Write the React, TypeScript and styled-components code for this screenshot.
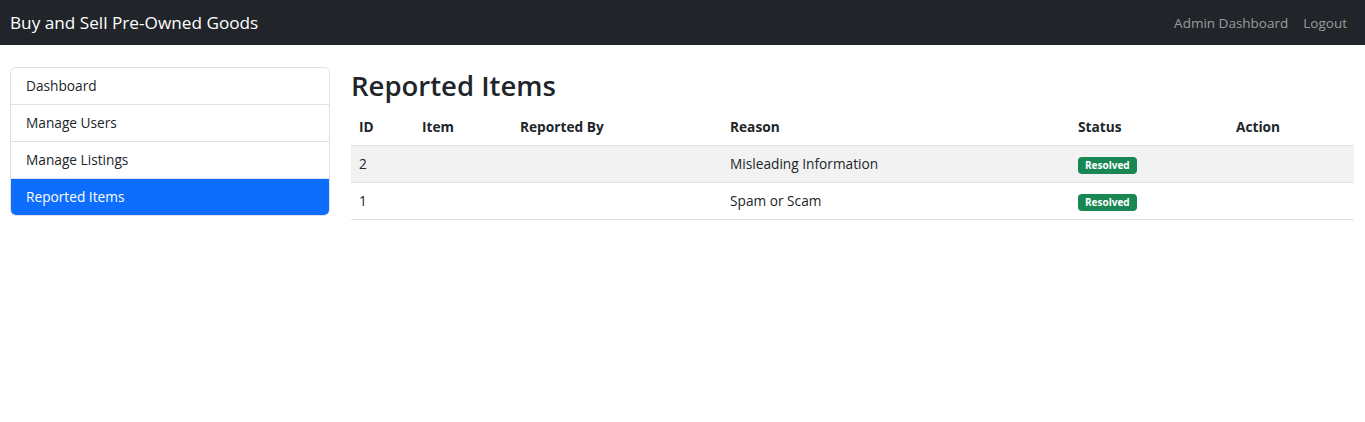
import React, { FC } from 'react';
import styled, { createGlobalStyle } from 'styled-components';

const GlobalStyle = createGlobalStyle`
  * { box-sizing: border-box; }
  body {
    margin: 0;
    background: #fff;
    color: #212529;
    font-family: "Segoe UI", "Open Sans", "Liberation Sans", sans-serif;
  }
`;

interface Report {
  id: number;
  item: string;
  reportedBy: string;
  reason: string;
  status: string;
}

const reports: Report[] = [
  { id: 2, item: '', reportedBy: '', reason: 'Misleading Information', status: 'Resolved' },
  { id: 1, item: '', reportedBy: '', reason: 'Spam or Scam', status: 'Resolved' },
];

const menu = ['Dashboard', 'Manage Users', 'Manage Listings', 'Reported Items'];

const StyledNavbar = styled.nav`
  display: flex;
  align-items: center;
  justify-content: space-between;
  height: 45px;
  padding: 0 18px 0 10px;
  background-color: #212529;
`;

const StyledBrand = styled.a`
  color: #fff;
  font-size: 17.2px;
  text-decoration: none;
`;

const StyledNavLinks = styled.div`
  display: flex;
  gap: 15px;
`;

const StyledNavLink = styled.a`
  color: rgba(255, 255, 255, 0.55);
  font-size: 13.5px;
  text-decoration: none;
`;

const StyledLayout = styled.div`
  display: grid;
  grid-template-columns: 320px 1fr;
  column-gap: 21px;
  padding: 22px 11px 0 10px;
`;

const StyledListGroup = styled.div`
  display: flex;
  flex-direction: column;
  align-self: start;
  border: 1px solid #dee2e6;
  border-radius: 6px;
  overflow: hidden;
`;

const StyledListItem = styled.a<{ $active?: boolean }>`
  display: block;
  padding: 8px 15px;
  font-size: 13.7px;
  line-height: 20px;
  text-decoration: none;
  color: ${({ $active }) => ($active ? '#fff' : '#212529')};
  background-color: ${({ $active }) => ($active ? '#0d6efd' : '#fff')};
  & + & {
    border-top: 1px solid #dee2e6;
  }
`;

const StyledMain = styled.main`
  padding-top: 2px;
`;

const StyledTitle = styled.h2`
  margin: 0 0 6px;
  font-size: 27.5px;
  font-weight: 600;
  line-height: 34px;
`;

const StyledTable = styled.table`
  width: 100%;
  border-collapse: collapse;
  font-size: 13.7px;
  line-height: 20px;
  th,
  td {
    padding: 8px;
    text-align: left;
    border-bottom: 1px solid #dee2e6;
  }
  th {
    font-weight: 700;
  }
  tbody tr:nth-child(odd) td {
    background-color: #f2f2f2;
  }
`;

const StyledBadge = styled.span`
  display: inline-block;
  padding: 3px 7px;
  border-radius: 4px;
  background-color: #198754;
  color: #fff;
  font-size: 10px;
  font-weight: 700;
  line-height: 11px;
  vertical-align: middle;
`;

const columns: [string, string][] = [
  ['ID', '63px'],
  ['Item', '98px'],
  ['Reported By', '210px'],
  ['Reason', '348px'],
  ['Status', '158px'],
  ['Action', 'auto'],
];

const App: FC = () => (
  <>
    <GlobalStyle />
    <StyledNavbar>
      <StyledBrand href="#">Buy and Sell Pre-Owned Goods</StyledBrand>
      <StyledNavLinks>
        <StyledNavLink href="#">Admin Dashboard</StyledNavLink>
        <StyledNavLink href="#">Logout</StyledNavLink>
      </StyledNavLinks>
    </StyledNavbar>
    <StyledLayout>
      <StyledListGroup>
        {menu.map((label) => (
          <StyledListItem key={label} href="#" $active={label === 'Reported Items'}>
            {label}
          </StyledListItem>
        ))}
      </StyledListGroup>
      <StyledMain>
        <StyledTitle>Reported Items</StyledTitle>
        <StyledTable>
          <colgroup>
            {columns.map(([name, width]) => (
              <col key={name} style={{ width }} />
            ))}
          </colgroup>
          <thead>
            <tr>
              {columns.map(([name]) => (
                <th key={name}>{name}</th>
              ))}
            </tr>
          </thead>
          <tbody>
            {reports.map((r) => (
              <tr key={r.id}>
                <td>{r.id}</td>
                <td>{r.item}</td>
                <td>{r.reportedBy}</td>
                <td>{r.reason}</td>
                <td>
                  <StyledBadge>{r.status}</StyledBadge>
                </td>
                <td />
              </tr>
            ))}
          </tbody>
        </StyledTable>
      </StyledMain>
    </StyledLayout>
  </>
);

export default App;
